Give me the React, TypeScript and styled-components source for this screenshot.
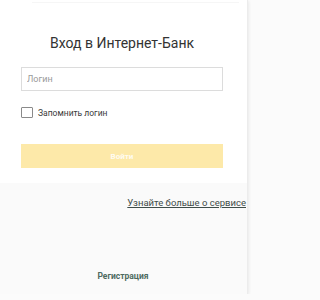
import styled, { createGlobalStyle } from 'styled-components'

const GlobalStyle = createGlobalStyle`
  * {
    box-sizing: border-box;
  }

  body {
    margin: 0;
    background: #fbfbfb;
    font-family: Roboto, "Liberation Sans", Arial, sans-serif;
  }
`

const Card = styled.div`
  width: 248px;
  height: 294px;
  display: flex;
  flex-direction: column;
  background: #fafafa;
  box-shadow: 1px 1px 3px rgba(0, 0, 0, 0.07);
  border-right: 1px solid #ececec;
`

const LoginSection = styled.section`
  background: #ffffff;
  padding: 2px 24px 15px 21px;
  display: flex;
  flex-direction: column;

  .topline {
    height: 1px;
    margin: 0 -16px 0 11px;
    background: #f6f6f6;
  }

  h1 {
    margin: 32px 0 0;
    font-size: 14px;
    line-height: 16px;
    font-weight: 400;
    color: #333333;
    text-align: center;
  }
`

const LoginInput = styled.input`
  margin-top: 16px;
  height: 24px;
  width: 100%;
  border: 1px solid #dcdcdc;
  padding: 0 5px;
  font-family: inherit;
  font-size: 9px;
  color: #333;
  outline: none;

  &::placeholder {
    color: #9a9a9a;
  }
`

const RememberRow = styled.label`
  margin-top: 16px;
  display: flex;
  align-items: center;
  gap: 5px;
  font-size: 8.5px;
  color: #3a3a3a;

  span.box {
    width: 12px;
    height: 11px;
    border: 1px solid #8a8a8a;
    border-radius: 1px;
    background: #fff;
  }
`

const SubmitButton = styled.button`
  margin-top: 26px;
  height: 24px;
  width: 100%;
  border: none;
  background: #fde9a9;
  color: rgba(255, 255, 255, 0.85);
  font-family: inherit;
  font-size: 8px;
  font-weight: 700;
  cursor: default;
`

const Footer = styled.footer`
  flex: 1;
  display: flex;
  flex-direction: column;
  padding: 14px 1px 12px 0;

  a.more {
    align-self: flex-end;
    font-size: 9.5px;
    line-height: 12px;
    color: #3f4d49;
    text-decoration: underline;
  }

  a.register {
    margin-top: auto;
    align-self: center;
    font-size: 8.5px;
    line-height: 12px;
    font-weight: 700;
    color: #4e6a60;
    text-decoration: none;
  }
`

export default function App() {
  return (
    <>
      <GlobalStyle />
      <Card>
        {/* Login form */}
        <LoginSection>
          <div className="topline" />
          <h1>Вход в Интернет-Банк</h1>
          <LoginInput placeholder="Логин" />
          <RememberRow>
            <span className="box" />
            Запомнить логин
          </RememberRow>
          <SubmitButton>Войти</SubmitButton>
        </LoginSection>

        {/* Links */}
        <Footer>
          <a className="more" href="#about">
            Узнайте больше о сервисе
          </a>
          <a className="register" href="#register">
            Регистрация
          </a>
        </Footer>
      </Card>
    </>
  )
}
